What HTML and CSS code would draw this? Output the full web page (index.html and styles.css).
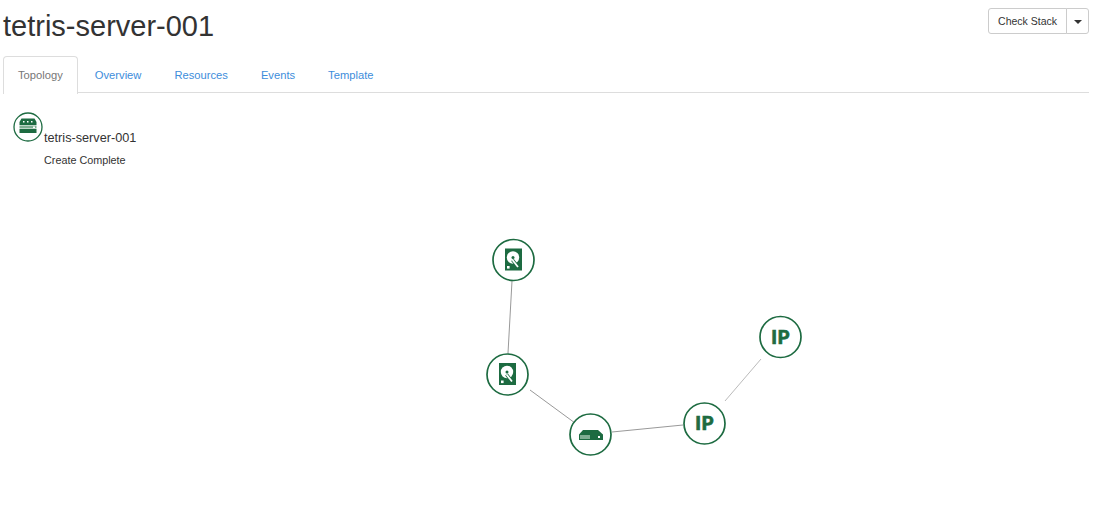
FILE: index.html
```html
<!DOCTYPE html>
<html lang="en">
<head>
  <meta charset="UTF-8">
  <title>tetris-server-001</title>
  <link rel="stylesheet" href="styles.css">
</head>
<body>
  <div class="page">
    <div class="page-header">
      <h1>tetris-server-001</h1>
      <div class="btn-group">
        <button class="btn">Check Stack</button>
        <button class="btn btn-caret"><span class="caret"></span></button>
      </div>
    </div>

    <ul class="nav-tabs">
      <li class="active"><a href="#">Topology</a></li>
      <li><a href="#">Overview</a></li>
      <li><a href="#">Resources</a></li>
      <li><a href="#">Events</a></li>
      <li><a href="#">Template</a></li>
    </ul>

    <div class="topology">
      <div class="stack-info">
        <svg class="stack-icon" width="30" height="30" viewBox="0 0 30 30">
          <circle class="node-ring-thin" cx="15" cy="15" r="14"></circle>
          <path class="fill-dark" d="M8.5 6.5h13l2 3.5v3H6.5v-3z"></path>
          <rect class="fill-light" x="6.5" y="13.5" width="17" height="3"></rect>
          <rect class="fill-dark" x="6.5" y="17" width="17" height="4"></rect>
          <rect class="fill-white" x="10" y="9" width="1.5" height="1.5"></rect>
          <rect class="fill-white" x="14" y="9" width="1.5" height="1.5"></rect>
          <rect class="fill-white" x="18" y="9" width="1.5" height="1.5"></rect>
          <rect class="fill-white" x="20" y="14.5" width="2" height="1.5"></rect>
        </svg>
        <div class="stack-text">
          <div class="stack-name">tetris-server-001</div>
          <div class="stack-status">Create Complete</div>
        </div>
      </div>

      <svg class="graph" width="1098" height="530" viewBox="0 0 1098 530">
        <defs>
          <g id="disk">
            <rect class="fill-dark" x="-8.5" y="-11.5" width="17" height="22"></rect>
            <circle class="fill-white" cx="-0.5" cy="-2.5" r="6.2"></circle>
            <circle class="fill-dark" cx="-0.5" cy="-2.5" r="1.5"></circle>
            <path class="hand-edge" d="M-1 0L4.5 7"></path>
            <path class="hand" d="M-1 0L4.5 7"></path>
            <rect class="fill-white" x="-6.5" y="6" width="2.6" height="2.6"></rect>
          </g>
        </defs>

        <line class="link" x1="512" y1="281" x2="508" y2="353"></line>
        <line class="link" x1="530" y1="390" x2="575" y2="423"></line>
        <line class="link" x1="612" y1="432" x2="683" y2="425"></line>
        <line class="link link-light" x1="725" y1="401" x2="761" y2="359"></line>

        <circle class="node-ring" cx="513.5" cy="260" r="20.5"></circle>
        <use href="#disk" x="513.5" y="260"></use>

        <circle class="node-ring" cx="507.5" cy="374.5" r="20.5"></circle>
        <use href="#disk" x="507.5" y="374.5"></use>

        <circle class="node-ring" cx="590.5" cy="434.5" r="20.5"></circle>
        <path class="fill-dark" d="M583 430h15l5 4.5v5.5h-24v-5.5z"></path>
        <rect class="fill-light" x="580" y="435" width="10" height="4"></rect>
        <rect class="fill-white" x="598" y="436" width="2" height="2"></rect>

        <circle class="node-ring" cx="704.5" cy="423.5" r="20.5"></circle>
        <text class="ip-label" x="704.5" y="430">IP</text>

        <circle class="node-ring" cx="780.5" cy="337" r="20.5"></circle>
        <text class="ip-label" x="780.5" y="343.5">IP</text>
      </svg>
    </div>
  </div>
</body>
</html>
```

FILE: styles.css
```css
body {
  margin: 0;
  background-color: white;
  font-family: 'Liberation Sans', Arial, sans-serif;
  color: #333;
}

.page {
  width: 1089px;
  height: 530px;
  padding-left: 3px;
  box-sizing: border-box;
  overflow: hidden;
}

.page-header {
  display: flex;
  justify-content: space-between;
  align-items: flex-start;
  height: 56px;
}

h1 {
  margin: 9px 0 0;
  font-size: 29px;
  line-height: 34px;
  font-weight: normal;
  color: #333;
}

.btn-group {
  display: flex;
  margin-top: 8px;
}

.btn {
  height: 26px;
  padding: 0 9px;
  font-family: inherit;
  font-size: 10.5px;
  color: #333;
  background-color: white;
  border: 1px solid #ccc;
  border-radius: 3px 0 0 3px;
}

.btn-caret {
  width: 23px;
  padding: 0;
  margin-left: -1px;
  border-radius: 0 3px 3px 0;
}

.caret {
  display: inline-block;
  vertical-align: middle;
  border-top: 4px solid #333;
  border-left: 4px solid transparent;
  border-right: 4px solid transparent;
}

.nav-tabs {
  display: flex;
  list-style: none;
  margin: 0;
  padding: 0;
  height: 36px;
  border-bottom: 1px solid #ddd;
  font-size: 11.2px;
}

.nav-tabs a {
  display: block;
  height: 36px;
  line-height: 37px;
  padding: 0 14px;
  margin-right: 3px;
  color: #3d8ddb;
  text-decoration: none;
  border: 1px solid transparent;
  border-bottom: none;
}

.nav-tabs .active a {
  color: #777;
  height: 37px;
  margin-right: 2px;
  background-color: white;
  border-color: #ddd;
  border-radius: 4px 4px 0 0;
}

.topology {
  position: relative;
}

.stack-info {
  display: flex;
  padding: 19px 0 0 10px;
}

.stack-icon {
  display: block;
}

.stack-text {
  margin-left: 1px;
  padding-top: 19px;
}

.stack-name {
  font-size: 12.7px;
  line-height: 15px;
}

.stack-status {
  margin-top: 8px;
  font-size: 10.8px;
  line-height: 13px;
}

/* graph uses page coordinates, so it sits on top of the tab body */
.graph {
  position: absolute;
  top: -93px;
  left: -3px;
}

.node-ring,
.node-ring-thin {
  fill: white;
  stroke: #1d6b41;
  stroke-width: 1.7;
}

.node-ring-thin {
  stroke-width: 1.3;
}

.link {
  stroke: #999;
  stroke-width: 1;
}

.link-light {
  stroke: #bbb;
}

.fill-dark {
  fill: #1d6b41;
}

.fill-light {
  fill: #7fae92;
}

.fill-white {
  fill: white;
}

.hand {
  stroke: white;
  stroke-width: 1.8;
  fill: none;
}

.hand-edge {
  stroke: #1d6b41;
  stroke-width: 3.4;
  fill: none;
}

.ip-label {
  font-family: 'Lato', sans-serif;
  font-size: 19px;
  font-weight: 900;
  letter-spacing: 0.5px;
  fill: #1d6b41;
  stroke: #1d6b41;
  stroke-width: 0.7;
  text-anchor: middle;
}
```
